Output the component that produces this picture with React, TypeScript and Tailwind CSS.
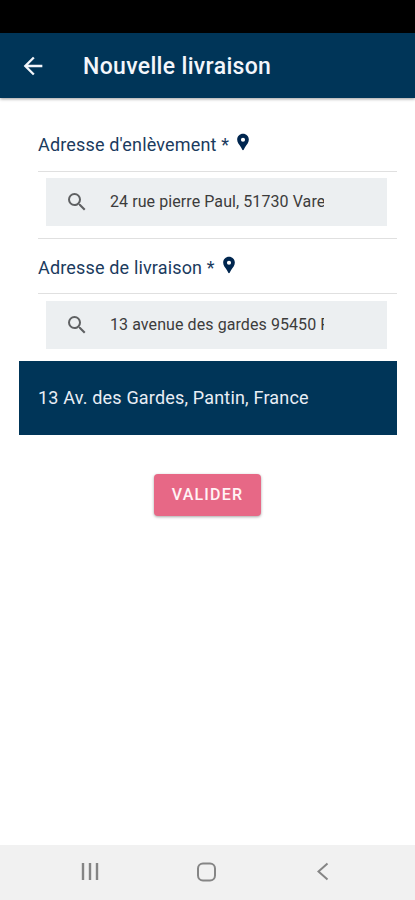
import React, { useState } from 'react';
import { MdArrowBack, MdLocationPin, MdSearch } from 'react-icons/md';

interface AddressFieldProps {
  label: string;
  value: string;
  onChange: (value: string) => void;
  labelClassName?: string;
  inputClassName?: string;
}

const AddressField = ({ label, value, onChange, labelClassName = '', inputClassName = '' }: AddressFieldProps) => (
  <div>
    <div className={`flex items-end ml-[38px] mr-[18px] border-b border-[#e0e0e0] text-[#1b3b5e] ${labelClassName}`}>
      <span className="text-[18px] leading-6 tracking-[0.16px] whitespace-nowrap">{label}</span>
      <MdLocationPin size={20} className="ml-1 mb-[5px] shrink-0 text-[#00264f]" />
    </div>
    <div className={`flex items-center ml-[46px] mr-[28px] h-12 bg-[#eceff1] pl-[19px] ${inputClassName}`}>
      <MdSearch size={24} className="text-[#5f6163] shrink-0" />
      <input
        type="text"
        value={value}
        onChange={(e) => onChange(e.target.value)}
        className="ml-[21px] w-[214px] bg-transparent outline-none text-[16px] leading-6 tracking-[0.08px] text-[#3c3c3c]"
      />
    </div>
  </div>
);

export default function App() {
  const [pickup, setPickup] = useState('24 rue pierre Paul, 51730 Vare');
  const [delivery, setDelivery] = useState('13 avenue des gardes 95450 Pantin');

  return (
    <div className="flex flex-col w-full h-[900px] bg-white overflow-hidden font-['Roboto',sans-serif]">
      {/* Status bar */}
      <div className="h-[33px] bg-black shrink-0" />

      <header className="flex items-center h-[65px] shrink-0 pl-[19px] bg-[#003558] text-[#f3f6fb] shadow-[0_1px_3px_rgba(0,0,0,0.4)]">
        <MdArrowBack size={28} />
        <h1 className="ml-[36px] pt-[2px] text-[23px] font-medium leading-8 tracking-[0.33px] whitespace-nowrap">Nouvelle livraison</h1>
      </header>

      <main className="flex-1 flex flex-col">
        <AddressField
          label="Adresse d'enlèvement *"
          value={pickup}
          onChange={setPickup}
          labelClassName="h-[74px] pb-[14px]"
          inputClassName="mt-[6px]"
        />
        <div className="ml-[38px] mr-[18px] mt-3 h-px bg-[#e0e0e0]" />
        <AddressField
          label="Adresse de livraison *"
          value={delivery}
          onChange={setDelivery}
          labelClassName="h-[55px] pb-[13px]"
          inputClassName="mt-[7px]"
        />

        {/* Suggestion */}
        <button className="mt-[12px] ml-[19px] mr-[18px] h-[74px] pl-[19px] pb-[2px] bg-[#003558] text-left text-[18px] tracking-[0.18px] text-[#e9eef5] whitespace-nowrap">
          13 Av. des Gardes, Pantin, France
        </button>

        <button className="mt-[39px] self-center h-[42px] w-[107px] rounded-[4px] bg-[#e76886] text-[16px] font-medium tracking-[1.2px] text-[#fff3f5] shadow-[0_1px_3px_rgba(0,0,0,0.35)]">
          VALIDER
        </button>
      </main>

      {/* System navigation */}
      <nav className="flex items-center h-[55px] shrink-0 pb-px bg-[#f1f1f1] text-[#858585]">
        <svg className="ml-[80px]" width="20" height="20" viewBox="0 0 20 20" stroke="currentColor" strokeWidth="2.4">
          <path d="M3 1v17M10 1v17M17 1v17" />
        </svg>
        <svg className="ml-[96px]" width="20" height="20" viewBox="0 0 20 20" fill="none" stroke="currentColor" strokeWidth="2">
          <rect x="2" y="1.5" width="17" height="17" rx="5" />
        </svg>
        <svg className="ml-[96px]" width="20" height="20" viewBox="0 0 20 20" fill="none" stroke="currentColor" strokeWidth="2">
          <path d="M15.5 1.5L6.5 9.5l9 8" />
        </svg>
      </nav>
    </div>
  );
}
